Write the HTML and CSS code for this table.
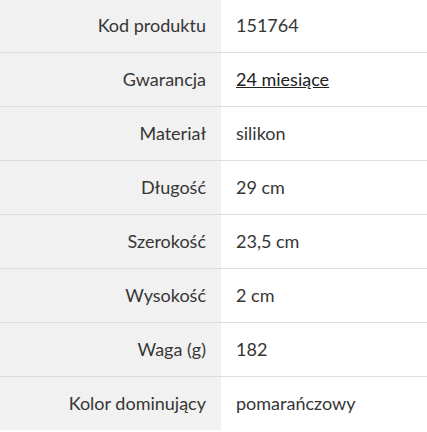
FILE: index.html
```html
<!DOCTYPE html>
<html lang="pl">
<head>
<meta charset="utf-8">
<link rel="stylesheet" href="styles.css">
</head>
<body>
<table class="specs">
  <tbody>
    <tr><th>Kod produktu</th><td>151764</td></tr>
    <tr><th>Gwarancja</th><td><a href="#" class="link">24 miesiące</a></td></tr>
    <tr><th>Materiał</th><td>silikon</td></tr>
    <tr><th>Długość</th><td>29 cm</td></tr>
    <tr><th>Szerokość</th><td>23,5 cm</td></tr>
    <tr><th>Wysokość</th><td>2 cm</td></tr>
    <tr><th>Waga (g)</th><td>182</td></tr>
    <tr><th>Kolor dominujący</th><td>pomarańczowy</td></tr>
  </tbody>
</table>
</body>
</html>
```
FILE: styles.css
```css
html, body {
  margin: 0;
  padding: 0;
  background: #ffffff;
}
body {
  font-family: Lato, "Noto Sans", sans-serif;
  color: #363636;
  overflow: hidden;
}
.specs {
  width: 427px;
  border-collapse: collapse;
  margin-top: -2px;
  font-size: 18px;
}
.specs tr {
  height: 54px;
  border-bottom: 1px solid #dddddd;
}
.specs tr:last-child {
  border-bottom: none;
}
.specs th {
  width: 191px;
  background: #f1f1f1;
  text-align: right;
  font-weight: normal;
  padding: 0 15px 0 15px;
  white-space: nowrap;
}
.specs td {
  text-align: left;
  font-weight: normal;
  padding: 0 15px;
}
.link {
  color: #222222;
  text-decoration: underline;
}
```
